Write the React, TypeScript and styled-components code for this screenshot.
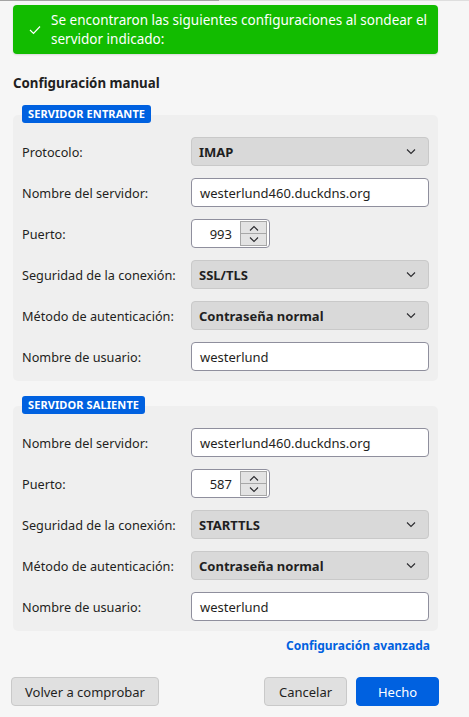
import React from "react";
import styled, { createGlobalStyle } from "styled-components";

const Global = createGlobalStyle`
  html, body { margin: 0; padding: 0; background: #f6f6f6; }
  body { font-family: "Noto Sans", "Open Sans", sans-serif; color: #1f1f22; }
  * { box-sizing: border-box; }
`;

const TopLine = styled.div`
  display: flex;
  height: 1px;
`;
const TopSeg = styled.div<{ $w?: number; $c: string }>`
  height: 1px;
  background: ${(p) => p.$c};
  ${(p) => (p.$w ? `width: ${p.$w}px;` : "flex: 1;")}
`;

const Page = styled.div`
  display: flex;
  flex-direction: column;
  padding: 4px 31px 0 13px;
`;

const Banner = styled.div`
  display: flex;
  align-items: center;
  gap: 10px;
  background: #12bc00;
  color: #fff;
  border-radius: 4px;
  padding: 5px 8px 5px 16px;
  min-height: 49px;
  font-size: 13.5px;
  line-height: 19px;
  box-shadow: 0 1px 2px rgba(0, 0, 0, 0.12);
  & > svg { flex-shrink: 0; }
`;

const Heading = styled.h2`
  margin: 20px 0 0 0;
  font-size: 13.3px;
  line-height: 19px;
  font-weight: 700;
  color: #1f1f22;
`;

const Section = styled.section<{ $mt: number }>`
  display: flex;
  flex-direction: column;
  margin-top: ${(p) => p.$mt}px;
  background: #efefef;
  border-radius: 5px;
  padding: 0 9px 10px 9px;
`;

const Badge = styled.div`
  align-self: flex-start;
  margin-top: -10px;
  background: #0061e0;
  color: #fff;
  font-size: 11px;
  font-weight: 700;
  line-height: 18px;
  height: 18px;
  padding: 0 6px;
  border-radius: 3px;
  letter-spacing: 0.1px;
`;

const Grid = styled.div`
  display: grid;
  grid-template-columns: 169px 238px;
  row-gap: 12px;
  align-items: center;
  margin-top: 14px;
`;

const Label = styled.div`
  font-size: 12.7px;
  color: #1f1f22;
`;

const SelectBox = styled.div`
  height: 29px;
  display: flex;
  align-items: center;
  justify-content: space-between;
  background: #d9d9d9;
  border: 1px solid #c9c9c9;
  border-radius: 4px;
  padding: 0 12px 0 7px;
  font-size: 13px;
  font-weight: 700;
  color: #1f1f22;
`;

const TextInput = styled.div`
  height: 29px;
  display: flex;
  align-items: center;
  background: #fff;
  border: 1px solid #8f8f9d;
  border-radius: 4px;
  padding: 0 8px;
  font-size: 13px;
  color: #1f1f22;
`;

const PortBox = styled.div`
  width: 79px;
  height: 29px;
  display: flex;
  align-items: stretch;
  background: #fff;
  border: 1px solid #8f8f9d;
  border-radius: 4px;
  padding: 1px 2px 1px 0;
`;

const PortValue = styled.div`
  flex: 1;
  display: flex;
  align-items: center;
  justify-content: flex-end;
  padding-right: 8px;
  font-size: 13px;
`;

const Spin = styled.div`
  width: 27px;
  display: flex;
  flex-direction: column;
`;

const SpinBtn = styled.div`
  flex: 1;
  display: flex;
  align-items: center;
  justify-content: center;
  background: #e3e3e3;
  border: 1px solid #a7a7a7;
  & + & { border-top: none; }
`;

const LinkRow = styled.div`
  display: flex;
  justify-content: flex-end;
  margin-top: 6px;
  padding-right: 8px;
`;

const Link = styled.a`
  color: #0061e0;
  font-size: 12px;
  font-weight: 700;
  line-height: 18px;
  text-decoration: none;
`;

const Footer = styled.div`
  display: flex;
  align-items: center;
  gap: 9px;
  margin: 22px -1px 0 -2px;
`;

const Button = styled.button<{ $primary?: boolean; $w: number }>`
  width: ${(p) => p.$w}px;
  height: 29px;
  font-family: inherit;
  font-size: 13px;
  border-radius: 4px;
  border: 1px solid ${(p) => (p.$primary ? "#0061e0" : "#c9c9c9")};
  background: ${(p) => (p.$primary ? "#0061e0" : "#e0e0e0")};
  color: ${(p) => (p.$primary ? "#fff" : "#1f1f22")};
  padding: 0;
`;

const Spacer = styled.div`
  flex: 1;
`;

const Chevron = ({ up }: { up?: boolean }) => (
  <svg width="10" height="6" viewBox="0 0 10 6">
    <path
      d={up ? "M1 5.5 L5 1.5 L9 5.5" : "M1 0.5 L5 4.5 L9 0.5"}
      fill="none"
      stroke="#2a2a2e"
      strokeWidth="1.1"
    />
  </svg>
);

const Check = () => (
  <svg width="12" height="10" viewBox="0 0 12 10">
    <path d="M1 5 L4.5 8.5 L11 1.5" fill="none" stroke="#fff" strokeWidth="1.2" />
  </svg>
);

const Select = ({ value }: { value: string }) => (
  <SelectBox>
    <span>{value}</span>
    <Chevron />
  </SelectBox>
);

const Port = ({ value }: { value: string }) => (
  <PortBox>
    <PortValue>{value}</PortValue>
    <Spin>
      <SpinBtn>
        <Chevron up />
      </SpinBtn>
      <SpinBtn>
        <Chevron />
      </SpinBtn>
    </Spin>
  </PortBox>
);

export default function App() {
  return (
    <>
      <Global />
      <TopLine>
        <TopSeg $w={219} $c="#a3a3a3" />
        <TopSeg $c="#dedede" />
      </TopLine>
      <Page>
        <Banner>
          <Check />
          <span>Se encontraron las siguientes configuraciones al sondear el servidor indicado:</span>
        </Banner>
        <Heading>Configuración manual</Heading>
        <Section $mt={22}>
          <Badge>SERVIDOR ENTRANTE</Badge>
          <Grid>
            <Label>Protocolo:</Label>
            <Select value="IMAP" />
            <Label>Nombre del servidor:</Label>
            <TextInput>westerlund460.duckdns.org</TextInput>
            <Label>Puerto:</Label>
            <Port value="993" />
            <Label>Seguridad de la conexión:</Label>
            <Select value="SSL/TLS" />
            <Label>Método de autenticación:</Label>
            <Select value="Contraseña normal" />
            <Label>Nombre de usuario:</Label>
            <TextInput>westerlund</TextInput>
          </Grid>
        </Section>
        <Section $mt={25}>
          <Badge>SERVIDOR SALIENTE</Badge>
          <Grid>
            <Label>Nombre del servidor:</Label>
            <TextInput>westerlund460.duckdns.org</TextInput>
            <Label>Puerto:</Label>
            <Port value="587" />
            <Label>Seguridad de la conexión:</Label>
            <Select value="STARTTLS" />
            <Label>Método de autenticación:</Label>
            <Select value="Contraseña normal" />
            <Label>Nombre de usuario:</Label>
            <TextInput>westerlund</TextInput>
          </Grid>
        </Section>
        <LinkRow>
          <Link>Configuración avanzada</Link>
        </LinkRow>
        <Footer>
          <Button $w={148}>Volver a comprobar</Button>
          <Spacer />
          <Button $w={83}>Cancelar</Button>
          <Button $w={83} $primary>Hecho</Button>
        </Footer>
      </Page>
    </>
  );
}
